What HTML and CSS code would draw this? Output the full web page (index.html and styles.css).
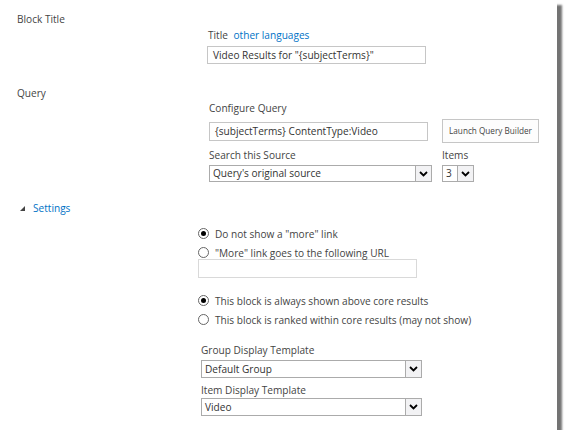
FILE: index.html
```html
<!DOCTYPE html>
<html>
<head>
<meta charset="utf-8">
<link rel="stylesheet" href="styles.css">
</head>
<body>
<div class="frame">
  <div class="label first">Block Title</div>
  <div class="field title-field">
    <div class="cap">Title <a class="link lang">other languages</a></div>
    <div class="input w-title">Video Results for "{subjectTerms}"</div>
  </div>

  <div class="label query">Query</div>
  <div class="field query-field">
    <div class="cap">Configure Query</div>
    <div class="row qrow">
      <div class="input w-query">{subjectTerms} ContentType:Video</div>
      <div class="button">Launch Query Builder</div>
    </div>
    <div class="row caps">
      <div class="cap src">Search this Source</div>
      <div class="cap">Items</div>
    </div>
    <div class="row">
      <div class="select w-src"><span class="val">Query's original source</span><span class="arrow"><svg width="9" height="6" viewBox="0 0 9 6"><path d="M1 1 L4.5 4.5 L8 1" fill="none" stroke="#000" stroke-width="1.8"/></svg></span></div>
      <div class="select w-items"><span class="val">3</span><span class="arrow"><svg width="9" height="6" viewBox="0 0 9 6"><path d="M1 1 L4.5 4.5 L8 1" fill="none" stroke="#000" stroke-width="1.8"/></svg></span></div>
    </div>
  </div>

  <div class="settings"><span class="tri"></span><a class="link">Settings</a></div>

  <div class="options">
    <div class="radio on">Do not show a "more" link</div>
    <div class="radio">"More" link goes to the following URL</div>
    <div class="input w-url"></div>
    <div class="radio on gap">This block is always shown above core results</div>
    <div class="radio">This block is ranked within core results (may not show)</div>

    <div class="cap tpl-cap">Group Display Template</div>
    <div class="select w-tpl"><span class="val">Default Group</span><span class="arrow"><svg width="9" height="6" viewBox="0 0 9 6"><path d="M1 1 L4.5 4.5 L8 1" fill="none" stroke="#000" stroke-width="1.8"/></svg></span></div>
    <div class="cap tpl-cap2">Item Display Template</div>
    <div class="select w-tpl tpl2"><span class="val">Video</span><span class="arrow"><svg width="9" height="6" viewBox="0 0 9 6"><path d="M1 1 L4.5 4.5 L8 1" fill="none" stroke="#000" stroke-width="1.8"/></svg></span></div>
  </div>
</div>
</body>
</html>
```

FILE: styles.css
```css
html, body {
  margin: 0;
  padding: 0;
  background: #fff;
}
body {
  font-family: "Open Sans", "Noto Sans", sans-serif;
  font-size: 10.1px;
  color: #444;
}
.frame {
  width: 557px;
  height: 430px;
  box-sizing: border-box;
  background: #fff;
  box-shadow: 5px 5px 2px rgba(0, 0, 0, 0.55);
  padding: 12px 0 0 17px;
}
.label {
  line-height: 14px;
  height: 14px;
}
.field {
  margin-left: 191px;
}
.title-field {
  margin-top: 2px;
}
.cap {
  line-height: 14px;
  height: 14px;
}
.link {
  color: #0072c6;
}
.lang {
  margin-left: 3px;
}
.input {
  box-sizing: border-box;
  border: 1px solid #c6c6c6;
  background: #fff;
  height: 19px;
  line-height: 17px;
  padding-left: 5px;
  white-space: nowrap;
  overflow: hidden;
  color: #333;
}
.title-field .input {
  margin-top: 4px;
}
.w-title {
  width: 219px;
  height: 18px;
  line-height: 16px;
  margin-left: -1px;
}
.label.query {
  margin-top: 22px;
}
.query-field {
  margin-top: 1px;
  margin-left: 192px;
}
.row {
  display: flex;
  align-items: flex-start;
}
.qrow {
  margin-top: 7px;
}
.w-query {
  width: 219px;
  height: 19px;
  line-height: 17px;
}
.button {
  box-sizing: border-box;
  margin-left: 14px;
  width: 97px;
  height: 24px;
  margin-top: -3px;
  border: 1px solid #c6c6c6;
  background: #fdfdfd;
  font-size: 8.2px;
  line-height: 22px;
  text-align: center;
  color: #444;
}
.caps {
  margin-top: 5px;
}
.src {
  width: 233px;
}
.select {
  box-sizing: border-box;
  display: flex;
  border: 1px solid #ababab;
  height: 17px;
  margin-top: 3px;
  background: #fff;
  color: #333;
}
.select .val {
  flex: 1;
  line-height: 15px;
  padding-left: 3px;
  white-space: nowrap;
  overflow: hidden;
}
.select .arrow {
  width: 15px;
  border-left: 1px solid #ababab;
  background: #f2f2f4;
  display: flex;
  align-items: center;
  justify-content: center;
}
.w-src { width: 223px; }
.w-items { width: 32px; margin-left: 10px; }
.settings {
  margin-top: 19px;
  display: flex;
  align-items: center;
  height: 14px;
}
.tri {
  width: 0;
  height: 0;
  margin-left: 3px;
  margin-right: 8px;
  border-left: 5px solid transparent;
  border-bottom: 5px solid #444;
}
.options {
  margin-left: 181px;
  margin-top: 12px;
}
.radio {
  position: relative;
  padding-left: 17px;
  line-height: 14px;
  height: 14px;
  margin-bottom: 5px;
}
.radio::before {
  content: "";
  position: absolute;
  left: 0;
  top: 1px;
  width: 11px;
  height: 11px;
  box-sizing: border-box;
  border: 1px solid #666;
  border-radius: 50%;
  background: #fff;
}
.radio.on::after {
  content: "";
  position: absolute;
  left: 3px;
  top: 4px;
  width: 5px;
  height: 5px;
  border-radius: 50%;
  background: #000;
}
.w-url {
  width: 219px;
  height: 19px;
  margin-top: -6px;
  border-color: #d9d9d9;
}
.gap {
  margin-top: 16px;
}
.tpl-cap {
  margin-top: 16px;
  margin-left: 3px;
}
.tpl-cap2 {
  margin-top: 5px;
  margin-left: 3px;
}
.w-tpl {
  width: 221px;
  height: 18px;
  margin-left: 3px;
}
.w-tpl .val {
  line-height: 16px;
}
.tpl2 {
  margin-top: 1px;
}
```
